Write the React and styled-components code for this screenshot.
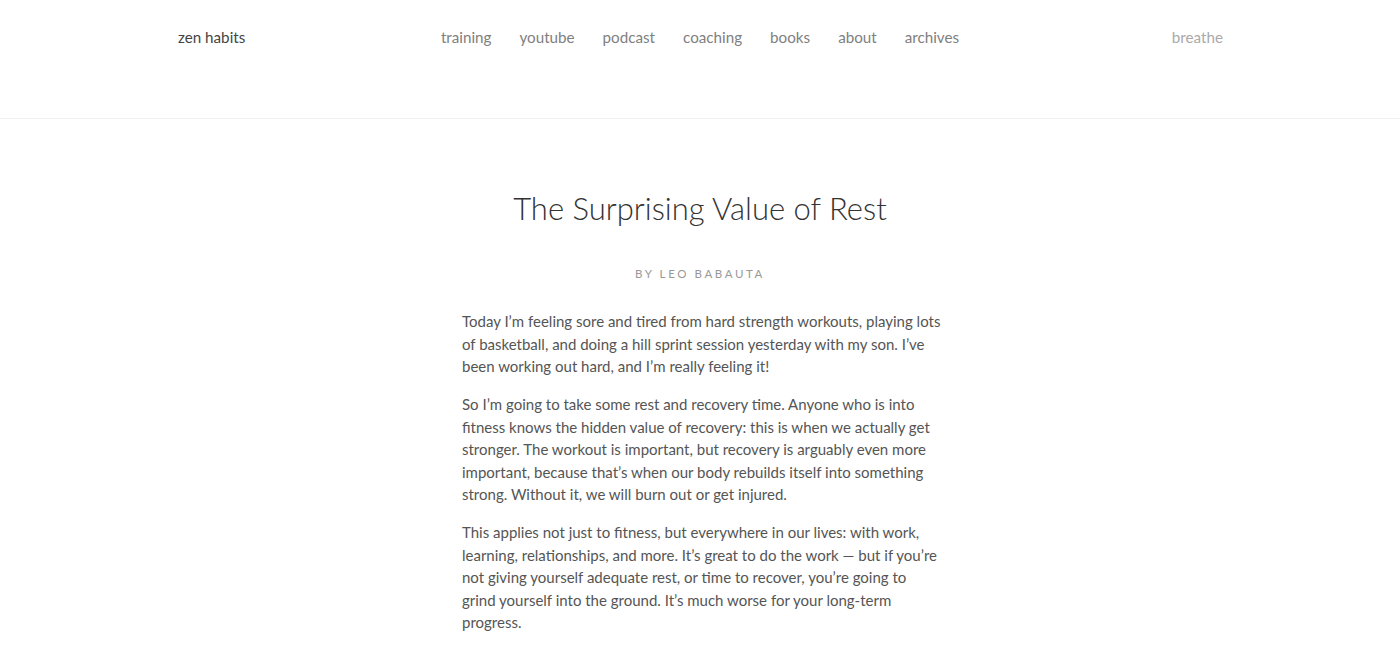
import styled, { createGlobalStyle } from 'styled-components';

const GlobalStyle = createGlobalStyle`
  body {
    margin: 0;
    background: #fff;
    font-family: Lato, "Open Sans", sans-serif;
    -webkit-font-smoothing: antialiased;
  }
`;

const navLinks = ['training', 'youtube', 'podcast', 'coaching', 'books', 'about', 'archives'];

const paragraphs = [
  'Today I’m feeling sore and tired from hard strength workouts, playing lots of basketball, and doing a hill sprint session yesterday with my son. I’ve been working out hard, and I’m really feeling it!',
  'So I’m going to take some rest and recovery time. Anyone who is into fitness knows the hidden value of recovery: this is when we actually get stronger. The workout is important, but recovery is arguably even more important, because that’s when our body rebuilds itself into something strong. Without it, we will burn out or get injured.',
  'This applies not just to fitness, but everywhere in our lives: with work, learning, relationships, and more. It’s great to do the work — but if you’re not giving yourself adequate rest, or time to recover, you’re going to grind yourself into the ground. It’s much worse for your long-term progress.',
];

const App = () => {
  return (
    <>
      <GlobalStyle />
      <Header>
        <HeaderInner>
          <Logo>zen habits</Logo>
          <Nav>
            {navLinks.map((link) => (
              <NavLink key={link}>{link}</NavLink>
            ))}
          </Nav>
          <Breathe>breathe</Breathe>
        </HeaderInner>
      </Header>
      <Article>
        <Title>The Surprising Value of Rest</Title>
        <Byline>By Leo Babauta</Byline>
        <Body>
          {paragraphs.map((p, i) => (
            <Para key={i}>{p}</Para>
          ))}
        </Body>
      </Article>
    </>
  );
};
export default App;

const Header = styled.header`
  height: 118px;
  border-bottom: 1px solid #f0f0f0;
`;

const HeaderInner = styled.div`
  width: 1046px;
  margin: 0 auto;
  display: grid;
  grid-template-columns: 1fr auto 1fr;
  align-items: center;
  height: 74px;
  font-size: 15.2px;
`;

const Logo = styled.div`
  color: #444;
  padding-left: 1px;
`;

const Nav = styled.nav`
  display: flex;
  gap: 28px;
`;

const NavLink = styled.a`
  color: #808080;
  cursor: pointer;
`;

const Breathe = styled.div`
  justify-self: end;
  color: #aaa;
`;

const Article = styled.main`
  display: flex;
  flex-direction: column;
  align-items: center;
  padding-top: 70px;
`;

const Title = styled.h1`
  margin: 0;
  font-size: 31px;
  font-weight: 300;
  color: #333;
  line-height: 38px;
`;

const Byline = styled.div`
  margin-top: 40px;
  font-size: 11.5px;
  letter-spacing: 2.6px;
  text-transform: uppercase;
  color: #999;
`;

const Body = styled.div`
  width: 479px;
  margin: 30px 0 0 3px;
`;

const Para = styled.p`
  margin: 0 0 15.5px;
  font-size: 15px;
  line-height: 22.5px;
  color: #555;
`;
